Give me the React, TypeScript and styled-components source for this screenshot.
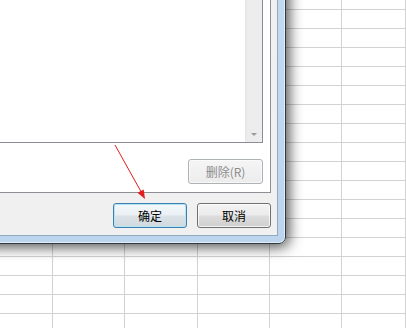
import React from "react";
import styled, { createGlobalStyle, css } from "styled-components";

const Global = createGlobalStyle`
  html, body { margin: 0; padding: 0; background: #fff; }
  body { width: 406px; height: 328px; overflow: hidden; }
`;

const Page = styled.div`
  position: relative;
  width: 406px;
  height: 328px;
  overflow: hidden;
  background: #fff;
  font-family: "Noto Sans CJK SC", "Liberation Sans", sans-serif;
`;

const Sheet = styled.div`
  display: grid;
  grid-template-columns: 53px 72px 73px 72px 72px 1fr;
  grid-template-rows: 10px repeat(17, 19px);
  width: 406px;
  height: 328px;
`;

const Cell = styled.div`
  box-sizing: border-box;
  border-right: 1px solid #d2d2d2;
  border-bottom: 1px solid #d2d2d2;
  background: #fff;
`;

const Dialog = styled.div`
  position: absolute;
  left: -200px;
  top: -100px;
  width: 486px;
  height: 344px;
  box-sizing: border-box;
  display: flex;
  flex-direction: column;
  padding: 30px 7px 7px 7px;
  border: 1px solid #2f3944;
  border-radius: 0 0 7px 7px;
  background: linear-gradient(to bottom, #c6dbf1 0%, #bcd4ee 100%);
  box-shadow: inset 0 0 0 1px rgba(255, 255, 255, 0.55),
    2px 2px 14px 1px rgba(0, 0, 0, 0.7);
`;

const Client = styled.div`
  flex: 1;
  display: flex;
  flex-direction: column;
  box-sizing: border-box;
  background: #f0f0f0;
  border: 1px solid #93a9c2;
  padding: 0 6px 0 6px;
`;

const Panel = styled.div`
  flex: 1;
  display: flex;
  flex-direction: column;
  box-sizing: border-box;
  background: #fff;
  border: 1px solid #8e8f95;
  padding: 0 7px 8px 7px;
`;

const ListBox = styled.div`
  flex: 1;
  display: flex;
  box-sizing: border-box;
  border: 1px solid #8a8d94;
  background: #fff;
`;

const ListItems = styled.div`
  flex: 1;
`;

const ScrollBar = styled.div`
  width: 17px;
  display: flex;
  flex-direction: column;
  justify-content: flex-end;
  background: linear-gradient(to right, #e3e3e3 0px, #ececec 2px, #ededed 100%);
`;

const ArrowButton = styled.div`
  height: 17px;
  display: flex;
  align-items: center;
  justify-content: center;
`;

const DownTriangle = styled.div`
  width: 0;
  height: 0;
  border-left: 3px solid transparent;
  border-right: 3px solid transparent;
  border-top: 3px solid #9a9a9a;
  margin-top: 1px;
`;

const DeleteRow = styled.div`
  display: flex;
  justify-content: flex-end;
  margin-top: 16px;
`;

const ButtonRow = styled.div`
  display: flex;
  justify-content: flex-end;
  gap: 10px;
  padding: 10px 0 7px 0;
`;

type Variant = "normal" | "default" | "disabled";

const Button = styled.div<{ $variant: Variant; $w: number; $h: number }>`
  box-sizing: border-box;
  width: ${(p) => p.$w}px;
  height: ${(p) => p.$h}px;
  display: flex;
  align-items: center;
  justify-content: center;
  border-radius: 3px;
  font-size: 12px;
  line-height: 1;
  color: #000;
  border: 1px solid #707070;
  background: linear-gradient(
    to bottom,
    #f3f3f3 0%,
    #ebebeb 48%,
    #dddddd 52%,
    #cfcfcf 100%
  );
  box-shadow: inset 0 0 0 1px rgba(255, 255, 255, 0.75);
  ${(p) =>
    p.$variant === "default" &&
    css`
      border-color: #3c7fb1;
      background: linear-gradient(
        to bottom,
        #f3f8fb 0%,
        #eaf0f3 48%,
        #dbe3e8 52%,
        #d0d9de 100%
      );
      box-shadow: inset 0 0 0 1px #b7e3f7;
    `}
  ${(p) =>
    p.$variant === "disabled" &&
    css`
      color: #8c8c8c;
      border-color: #adb2b5;
      background: linear-gradient(to bottom, #f5f5f5 0%, #ececec 100%);
      box-shadow: inset 0 0 0 1px rgba(255, 255, 255, 0.6);
    `}
`;

const Overlay = styled.svg`
  position: absolute;
  left: 0;
  top: 0;
  pointer-events: none;
`;

export default function App() {
  const cells = Array.from({ length: 6 * 18 }, (_, i) => <Cell key={i} />);
  return (
    <Page>
      <Global />
      <Sheet>{cells}</Sheet>
      <Dialog>
        <Client>
          <Panel>
            <ListBox>
              <ListItems />
              <ScrollBar>
                <ArrowButton>
                  <DownTriangle />
                </ArrowButton>
              </ScrollBar>
            </ListBox>
            <DeleteRow>
              <Button $variant="disabled" $w={75} $h={25}>
                删除(R)
              </Button>
            </DeleteRow>
          </Panel>
          <ButtonRow>
            <Button $variant="default" $w={74} $h={25}>
              确定
            </Button>
            <Button $variant="normal" $w={74} $h={25}>
              取消
            </Button>
          </ButtonRow>
        </Client>
      </Dialog>
      <Overlay width={406} height={328} viewBox="0 0 406 328">
        <line x1={115} y1={145} x2={141.5} y2={192.5} stroke="#e01e1e" strokeWidth={1} />
        <polygon points="145,199 137.5,192.8 143.7,189.4" fill="#e01e1e" />
      </Overlay>
    </Page>
  );
}
